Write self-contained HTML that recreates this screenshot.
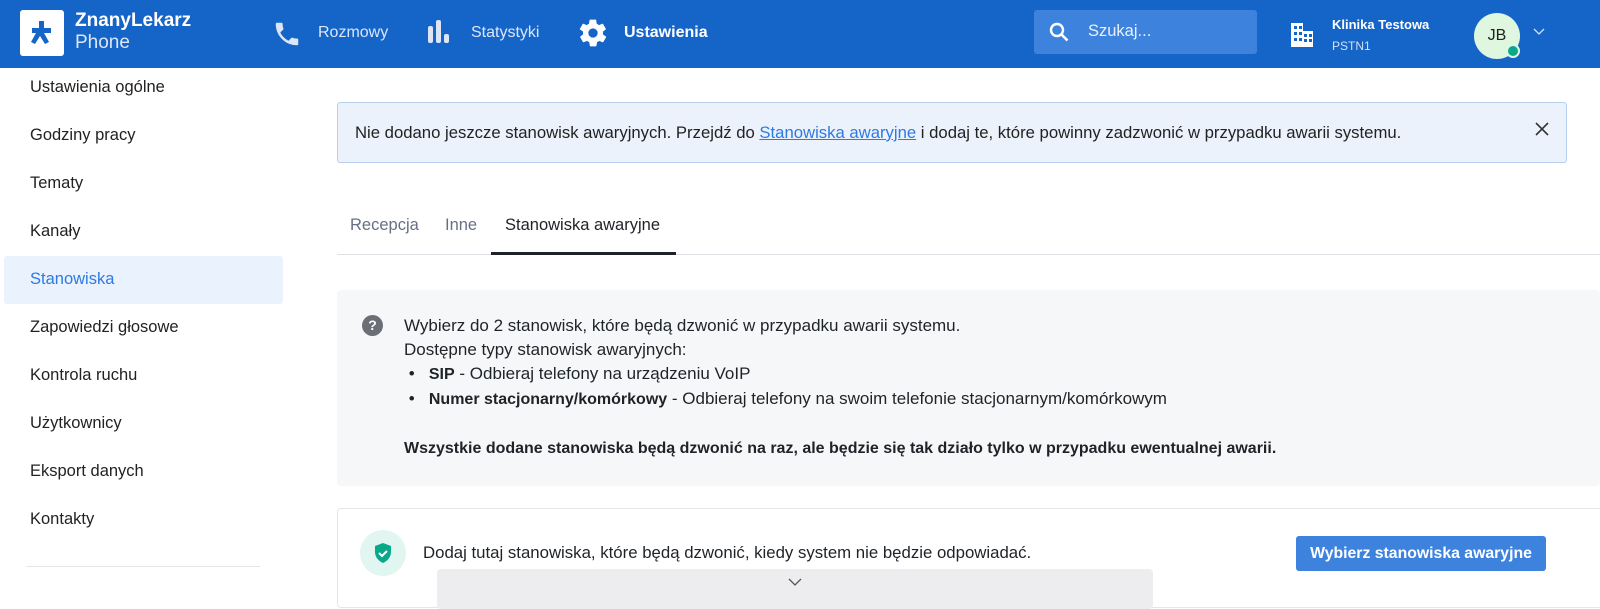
<!DOCTYPE html>
<html><head><meta charset="utf-8"><style>
*{box-sizing:border-box;margin:0;padding:0}
body{width:1600px;height:598px;overflow:hidden;background:#fff;font-family:"Liberation Sans",sans-serif;color:#1f2328;position:relative}
.top{position:absolute;left:0;top:0;width:1600px;height:68px;background:#1565c8}
.abs{position:absolute}
.nav{color:#dce6f7;font-size:16px}
.side div{position:absolute;left:30px;font-size:16.5px;color:#222}
</style></head><body>
<div class="top">
 <div class="abs" style="left:20px;top:10px;width:44px;height:46px;background:#fff;border-radius:3px"></div>
 <svg class="abs" style="left:26px;top:16px" width="32" height="34" viewBox="0 0 32 34"><path d="M13 5h5v7h7v5h-7l5 9-4 2-5-8-5 8-4-2 5-9H6v-5h7z" fill="#1565c8"/></svg>
 <div class="abs" style="left:75px;top:10px;color:#fff;font-weight:bold;font-size:19px">ZnanyLekarz</div>
 <div class="abs" style="left:75px;top:32px;color:#dce6f7;font-size:19px">Phone</div>
 <svg class="abs" style="left:272px;top:19px" width="30" height="30" viewBox="0 0 24 24"><path d="M6.6 10.8c1.4 2.8 3.8 5.1 6.6 6.6l2.2-2.2c.3-.3.7-.4 1-.2 1.1.4 2.3.6 3.6.6.6 0 1 .4 1 1V20c0 .6-.4 1-1 1C10.6 21 3 13.4 3 4c0-.6.4-1 1-1h3.5c.6 0 1 .4 1 1 0 1.3.2 2.5.6 3.6.1.3 0 .7-.2 1z" fill="#dce6f7"/></svg>
 <div class="abs nav" style="left:318px;top:24px">Rozmowy</div>
 <div class="abs" style="left:428px;top:26px;width:5px;height:17px;background:#dce6f7;border-radius:2px"></div>
 <div class="abs" style="left:436px;top:20px;width:5px;height:23px;background:#dce6f7;border-radius:2px"></div>
 <div class="abs" style="left:444px;top:34px;width:5px;height:9px;background:#dce6f7;border-radius:2px"></div>
 <div class="abs nav" style="left:471px;top:24px">Statystyki</div>
 <svg class="abs" style="left:577px;top:17px" width="32" height="32" viewBox="0 0 24 24"><path d="M19.4 13c0-.3.1-.6.1-1s0-.7-.1-1l2.1-1.6c.2-.2.2-.4.1-.6l-2-3.5c-.1-.2-.4-.3-.6-.2l-2.5 1c-.5-.4-1.1-.7-1.7-1l-.4-2.6c0-.3-.2-.5-.5-.5h-4c-.3 0-.5.2-.5.4l-.4 2.7c-.6.2-1.100.6-1.7 1l-2.5-1c-.2-.1-.5 0-.6.2l-2 3.5c-.1.2-.1.5.1.6L4.6 11c0 .3-.1.7-.1 1s0 .7.1 1l-2.1 1.6c-.2.2-.2.4-.1.6l2 3.5c.1.2.4.3.6.2l2.5-1c.5.4 1.1.7 1.7 1l.4 2.6c0 .3.2.5.5.5h4c.3 0 .5-.2.5-.4l.4-2.7c.6-.2 1.2-.6 1.7-1l2.5 1c.2.1.5 0 .6-.2l2-3.5c.1-.2.1-.5-.1-.6zM12 15.5a3.5 3.5 0 110-7 3.5 3.5 0 010 7z" fill="#fff"/></svg>
 <div class="abs" style="left:624px;top:24px;color:#fff;font-weight:bold;font-size:16px">Ustawienia</div>
 <div class="abs" style="left:1034px;top:10px;width:223px;height:44px;background:#3d83de;border-radius:3px"></div>
 <svg class="abs" style="left:1047px;top:20px" width="24" height="24" viewBox="0 0 24 24"><circle cx="10" cy="10" r="6" stroke="#fff" stroke-width="2.4" fill="none"/><path d="M14.5 14.5l6 6" stroke="#fff" stroke-width="2.6"/></svg>
 <div class="abs" style="left:1088px;top:22px;color:#e8f0fb;font-size:16.5px">Szukaj...</div>
 <svg class="abs" style="left:1287px;top:19px" width="30" height="28" viewBox="0 0 30 28"><path d="M4 4h12v8h10v16H4z" fill="#fff"/><g fill="#1565c8"><rect x="7" y="7" width="3" height="3"/><rect x="12" y="7" width="3" height="3"/><rect x="7" y="13" width="3" height="3"/><rect x="12" y="13" width="3" height="3"/><rect x="17" y="15" width="3" height="3"/><rect x="22" y="15" width="3" height="3"/><rect x="7" y="19" width="3" height="3"/><rect x="12" y="19" width="3" height="3"/><rect x="17" y="20" width="3" height="3"/><rect x="22" y="20" width="3" height="3"/></g></svg>
 <div class="abs" style="left:1332px;top:17px;color:#fff;font-weight:bold;font-size:13px">Klinika Testowa</div>
 <div class="abs" style="left:1332px;top:39px;color:#cfe0f7;font-size:12px">PSTN1</div>
 <div class="abs" style="left:1474px;top:13px;width:46px;height:46px;border-radius:50%;background:#dff6df;color:#222;font-size:16px;text-align:center;line-height:46px">JB</div>
 <div class="abs" style="left:1506px;top:44px;width:14px;height:14px;border-radius:50%;background:#0aa88a;border:2px solid #dff6df"></div>
 <svg class="abs" style="left:1533px;top:28px" width="12" height="8"><path d="M1 1l5 5 5-5" stroke="#cfe0f7" fill="none" stroke-width="1.3"/></svg>
</div>
<div class="side">
 <div style="top:78px">Ustawienia ogólne</div>
 <div style="top:126px">Godziny pracy</div>
 <div style="top:174px">Tematy</div>
 <div style="top:222px">Kanały</div>
 <span class="abs" style="left:4px;top:256px;width:279px;height:48px;background:#eaf2fd;border-radius:3px"></span>
 <div style="top:270px;color:#2f7ae0">Stanowiska</div>
 <div style="top:318px">Zapowiedzi głosowe</div>
 <div style="top:366px">Kontrola ruchu</div>
 <div style="top:414px">Użytkownicy</div>
 <div style="top:462px">Eksport danych</div>
 <div style="top:510px">Kontakty</div>
 <span class="abs" style="left:26px;top:566px;width:234px;height:1px;background:#e4e6ea"></span>
</div>
<div class="abs" style="left:337px;top:102px;width:1230px;height:61px;background:#ebf2fc;border:1px solid #b8cfee;border-radius:3px"></div>
<div class="abs" style="left:355px;top:123px;font-size:16.7px;color:#222;white-space:nowrap">Nie dodano jeszcze stanowisk awaryjnych. Przejdź do <span style="color:#2f7ae0;text-decoration:underline">Stanowiska awaryjne</span> i dodaj te, które powinny zadzwonić w przypadku awarii systemu.</div>
<svg class="abs" style="left:1535px;top:122px" width="14" height="14"><path d="M1 1l12 12M13 1L1 13" stroke="#333" stroke-width="1.6"/></svg>
<div class="abs" style="left:350px;top:216px;font-size:16.5px;color:#667085">Recepcja</div>
<div class="abs" style="left:445px;top:216px;font-size:16.5px;color:#667085">Inne</div>
<div class="abs" style="left:505px;top:216px;font-size:16.5px;color:#1f2328">Stanowiska awaryjne</div>
<div class="abs" style="left:337px;top:254px;width:1263px;height:1px;background:#dde0e5"></div>
<div class="abs" style="left:491px;top:252px;width:185px;height:3px;background:#1f2328"></div>
<div class="abs" style="left:337px;top:290px;width:1263px;height:196px;background:#f6f7f9;border-radius:4px"></div>
<div class="abs" style="left:362px;top:315px;width:21px;height:21px;border-radius:50%;background:#6b6f75;color:#fff;font-weight:bold;font-size:14px;text-align:center;line-height:21px">?</div>
<div class="abs" style="left:404px;top:314px;font-size:17px;line-height:24px;color:#1f2328;white-space:nowrap">
Wybierz do 2 stanowisk, które będą dzwonić w przypadku awarii systemu.<br>Dostępne typy stanowisk awaryjnych:<br>
&nbsp;•&nbsp;&nbsp;&nbsp;<b style="font-size:16px">SIP</b> - Odbieraj telefony na urządzeniu VoIP<br>
&nbsp;•&nbsp;&nbsp;&nbsp;<b style="font-size:16px">Numer stacjonarny/komórkowy</b> - Odbieraj telefony na swoim telefonie stacjonarnym/komórkowym<br><br>
<b style="font-size:16px">Wszystkie dodane stanowiska będą dzwonić na raz, ale będzie się tak działo tylko w przypadku ewentualnej awarii.</b></div>
<div class="abs" style="left:337px;top:508px;width:1270px;height:100px;border:1px solid #e4e6ea;border-radius:4px"></div>
<div class="abs" style="left:360px;top:530px;width:46px;height:46px;border-radius:50%;background:#e2f6f1"></div>
<svg class="abs" style="left:373px;top:542px" width="20" height="22" viewBox="0 0 20 22"><path d="M10 1l8 3v6c0 5-3.5 9-8 11-4.5-2-8-6-8-11V4z" fill="#0aa88a"/><path d="M6 11l3 3 5-5" stroke="#fff" stroke-width="2" fill="none"/></svg>
<div class="abs" style="left:423px;top:543px;font-size:16.8px;color:#1f2328;white-space:nowrap">Dodaj tutaj stanowiska, które będą dzwonić, kiedy system nie będzie odpowiadać.</div>
<div class="abs" style="left:1296px;top:536px;width:250px;height:35px;background:#3d83de;border-radius:3px;color:#fff;font-weight:bold;font-size:15.8px;text-align:center;line-height:35px;white-space:nowrap">Wybierz stanowiska awaryjne</div>
<div class="abs" style="left:437px;top:569px;width:716px;height:40px;background:#ededf0;border-radius:4px"></div>
<svg class="abs" style="left:788px;top:578px" width="14" height="8"><path d="M1 1l6 6 6-6" stroke="#555" fill="none" stroke-width="1.3"/></svg>
</body></html>
